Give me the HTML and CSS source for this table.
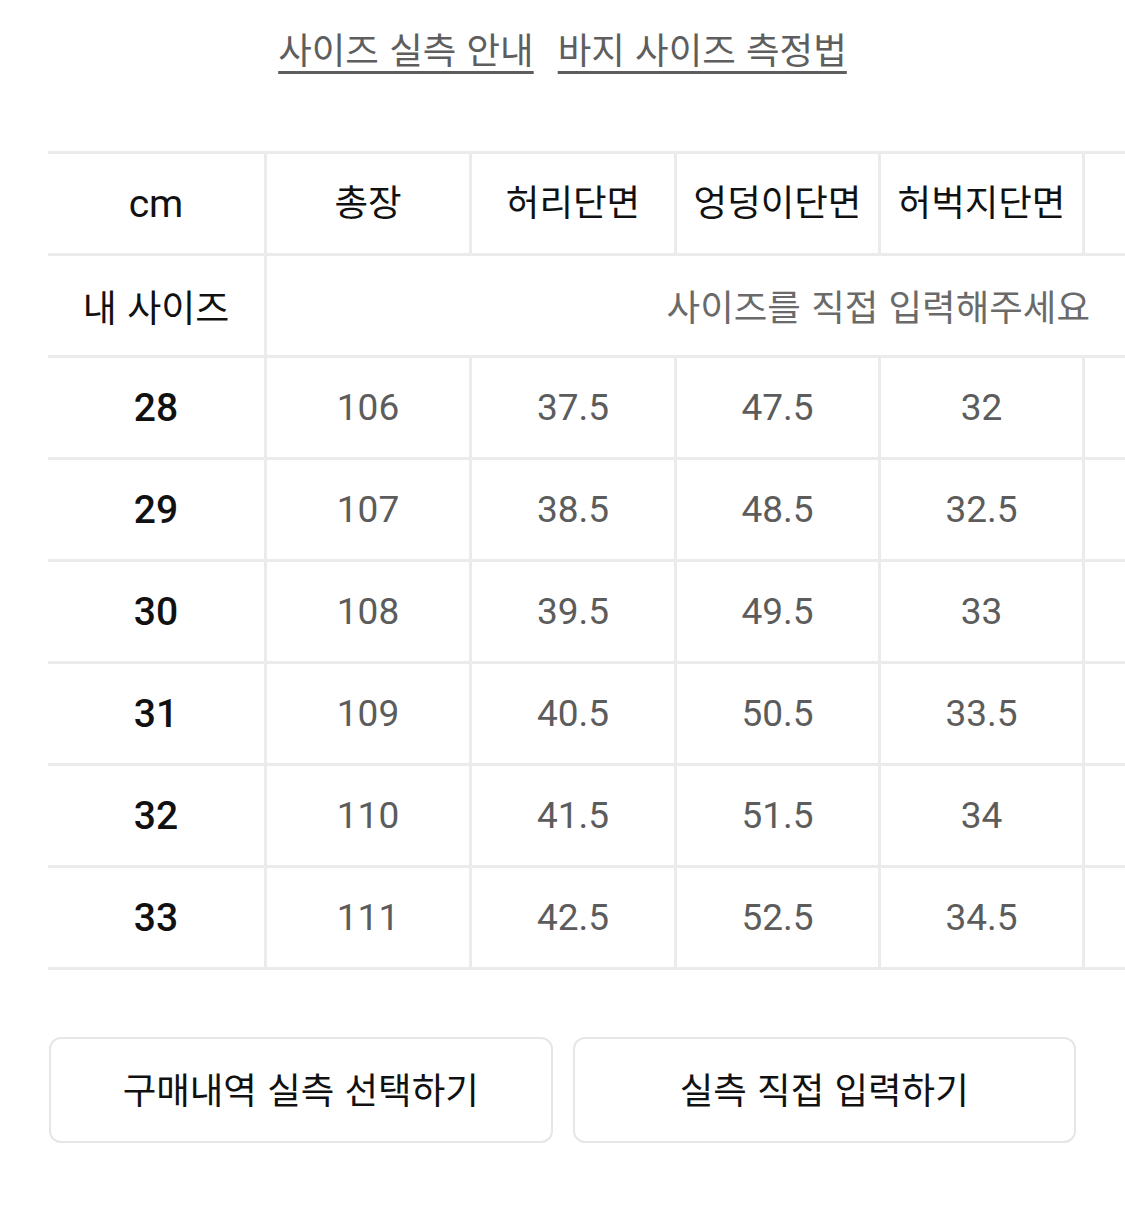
FILE: index.html
```html
<!DOCTYPE html>
<html lang="ko">
<head>
<meta charset="utf-8">
<title>사이즈 실측</title>
<link rel="stylesheet" href="styles.css">
</head>
<body>
<div class="page">
  <nav class="links">
    <a class="link" href="#">사이즈 실측 안내</a>
    <a class="link" href="#">바지 사이즈 측정법</a>
  </nav>

  <div class="table-wrap">
    <div class="grid">
      <div class="cell head unit">cm</div>
      <div class="cell head">총장</div>
      <div class="cell head">허리단면</div>
      <div class="cell head">엉덩이단면</div>
      <div class="cell head">허벅지단면</div>
      <div class="cell head"></div>

      <div class="cell label">내 사이즈</div>
      <div class="cell mine">사이즈를 직접 입력해주세요</div>

      <div class="cell label num">28</div>
      <div class="cell val">106</div><div class="cell val">37.5</div><div class="cell val">47.5</div><div class="cell val">32</div><div class="cell val"></div>

      <div class="cell label num">29</div>
      <div class="cell val">107</div><div class="cell val">38.5</div><div class="cell val">48.5</div><div class="cell val">32.5</div><div class="cell val"></div>

      <div class="cell label num">30</div>
      <div class="cell val">108</div><div class="cell val">39.5</div><div class="cell val">49.5</div><div class="cell val">33</div><div class="cell val"></div>

      <div class="cell label num">31</div>
      <div class="cell val">109</div><div class="cell val">40.5</div><div class="cell val">50.5</div><div class="cell val">33.5</div><div class="cell val"></div>

      <div class="cell label num">32</div>
      <div class="cell val">110</div><div class="cell val">41.5</div><div class="cell val">51.5</div><div class="cell val">34</div><div class="cell val"></div>

      <div class="cell label num">33</div>
      <div class="cell val">111</div><div class="cell val">42.5</div><div class="cell val">52.5</div><div class="cell val">34.5</div><div class="cell val"></div>
    </div>
  </div>

  <div class="actions">
    <button class="btn" type="button">구매내역 실측 선택하기</button>
    <button class="btn" type="button">실측 직접 입력하기</button>
  </div>
</div>
</body>
</html>
```

FILE: styles.css
```css
html, body {
  margin: 0;
  padding: 0;
  background: #ffffff;
}

body {
  font-family: "Roboto", "Noto Sans CJK KR", sans-serif;
  color: #111111;
  width: 1125px;
  height: 1205px;
  overflow: hidden;
}

.page {
  display: flex;
  flex-direction: column;
}

.links {
  display: flex;
  justify-content: center;
  gap: 24px;
  padding-top: 24px;
  height: 50px;
}

.link {
  font-family: "Noto Sans CJK KR", sans-serif;
  font-size: 36.5px;
  line-height: 50px;
  color: #5e5e5e;
  text-decoration: underline;
  text-decoration-thickness: 3px;
  text-underline-offset: 7px;
  text-decoration-color: #5e5e5e;
}

.table-wrap {
  margin-top: 77px;
  margin-left: 48px;
  width: 1077px;
  overflow: hidden;
}

.grid {
  display: grid;
  grid-template-columns: 216px 202px 202px 201px 201px 202px;
  grid-auto-rows: 99px;
  gap: 3px;
  padding: 3px 0;
  background: #ebebeb;
  width: 1239px;
}

.cell {
  background: #ffffff;
  display: flex;
  align-items: center;
  justify-content: center;
}

.head {
  font-family: "Noto Sans CJK KR", sans-serif;
  font-size: 36.5px;
  font-weight: 400;
  color: #111111;
  padding-bottom: 6px;
}

.head.unit {
  font-family: "Roboto", sans-serif;
  font-size: 39px;
  font-weight: 400;
  padding-bottom: 0;
}

.label {
  font-family: "Noto Sans CJK KR", sans-serif;
  font-size: 37px;
  font-weight: 400;
  color: #111111;
}

.label.num {
  font-family: "Roboto", sans-serif;
  font-size: 39px;
  font-weight: 500;
}

.mine {
  grid-column: 2 / -1;
  justify-content: flex-end;
  padding-right: 197px;
  font-family: "Noto Sans CJK KR", sans-serif;
  font-size: 36.5px;
  color: #6a6a6a;
}

.val {
  font-family: "Roboto", sans-serif;
  font-size: 37px;
  color: #5c5c5c;
}

.actions {
  display: flex;
  gap: 20px;
  padding: 0 49px;
  margin-top: 67px;
}

.btn {
  flex: 1;
  height: 106px;
  background: #ffffff;
  border: 2px solid #e6e6e6;
  border-radius: 12px;
  font-family: "Noto Sans CJK KR", sans-serif;
  font-size: 36.5px;
  font-weight: 400;
  color: #111111;
  padding: 0 0 4px;
}
```
